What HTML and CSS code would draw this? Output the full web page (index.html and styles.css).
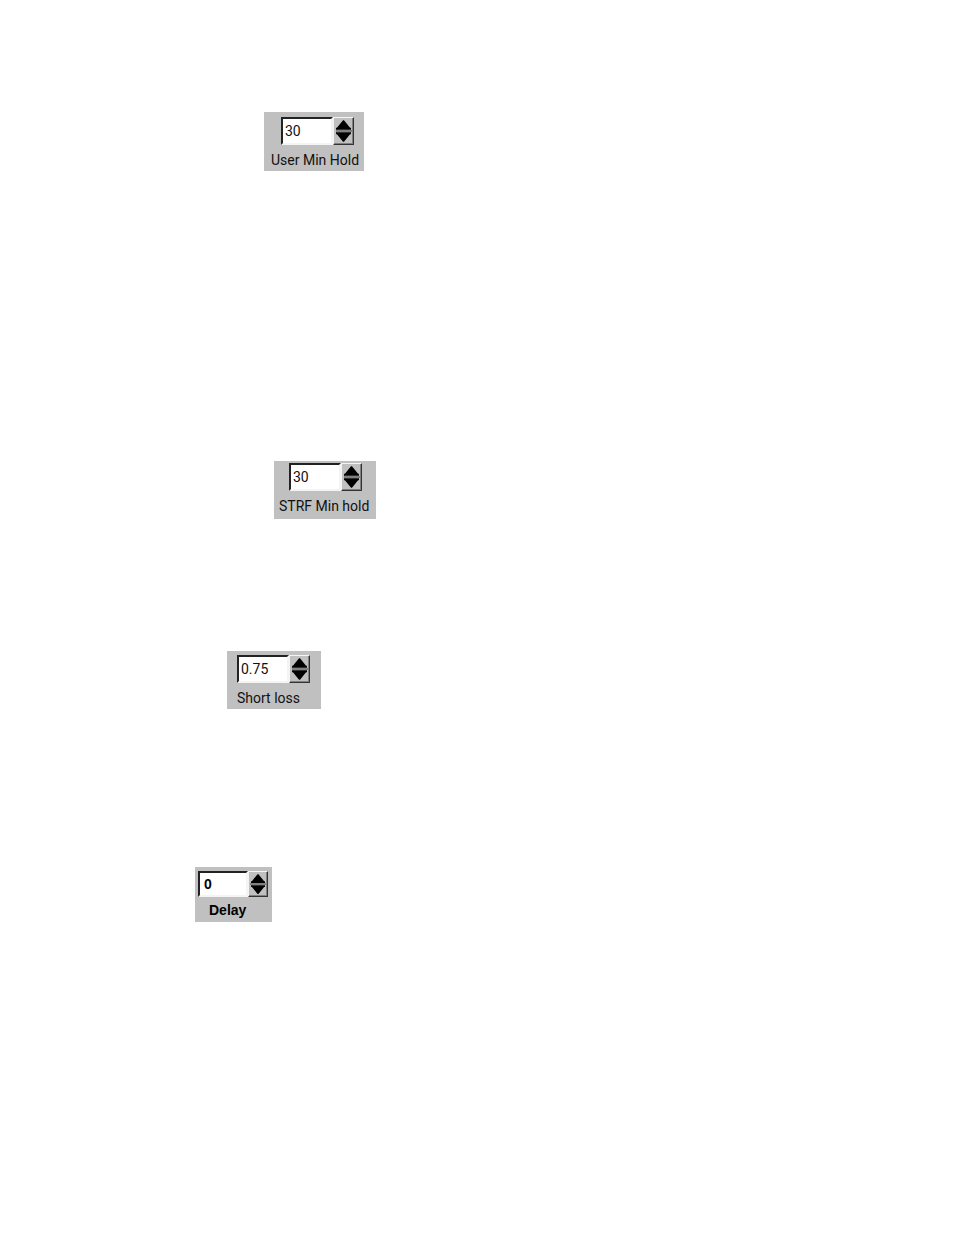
FILE: index.html
```html
<!DOCTYPE html>
<html lang="en">
<head>
<meta charset="utf-8">
<title>Hold settings</title>
<link rel="stylesheet" href="styles.css">
</head>
<body>
<main class="page">
  <section class="panel panel-user">
    <div class="spinner">
      <input class="value" id="user-hold" type="text" value="30">
      <div class="steps">
        <button class="step" type="button" aria-label="Increase user min hold"><svg class="arrow" viewBox="0 0 16 10"><path d="M7.5 0H8.5L15 8H16V10H0V8H1Z"/></svg></button>
        <button class="step" type="button" aria-label="Decrease user min hold"><svg class="arrow" viewBox="0 0 16 10"><path d="M0 0H16V2H15L8.5 10H7.5L1 2H0Z"/></svg></button>
      </div>
    </div>
    <label class="caption" for="user-hold">User Min Hold</label>
  </section>
  <section class="panel panel-strf">
    <div class="spinner">
      <input class="value" id="strf-hold" type="text" value="30">
      <div class="steps">
        <button class="step" type="button" aria-label="Increase STRF min hold"><svg class="arrow" viewBox="0 0 16 10"><path d="M7.5 0H8.5L15 8H16V10H0V8H1Z"/></svg></button>
        <button class="step" type="button" aria-label="Decrease STRF min hold"><svg class="arrow" viewBox="0 0 16 10"><path d="M0 0H16V2H15L8.5 10H7.5L1 2H0Z"/></svg></button>
      </div>
    </div>
    <label class="caption" for="strf-hold">STRF Min hold</label>
  </section>
  <section class="panel panel-loss">
    <div class="spinner">
      <input class="value" id="short-loss" type="text" value="0.75">
      <div class="steps">
        <button class="step" type="button" aria-label="Increase short loss"><svg class="arrow" viewBox="0 0 16 10"><path d="M7.5 0H8.5L15 8H16V10H0V8H1Z"/></svg></button>
        <button class="step" type="button" aria-label="Decrease short loss"><svg class="arrow" viewBox="0 0 16 10"><path d="M0 0H16V2H15L8.5 10H7.5L1 2H0Z"/></svg></button>
      </div>
    </div>
    <label class="caption" for="short-loss">Short loss</label>
  </section>
  <section class="panel panel-delay">
    <div class="spinner">
      <input class="value" id="delay" type="text" value="0">
      <div class="steps">
        <button class="step" type="button" aria-label="Increase delay"><svg class="arrow" viewBox="0 0 16 10"><path d="M7.5 0H8.5L15 8H16V10H0V8H1Z"/></svg></button>
        <button class="step" type="button" aria-label="Decrease delay"><svg class="arrow" viewBox="0 0 16 10"><path d="M0 0H16V2H15L8.5 10H7.5L1 2H0Z"/></svg></button>
      </div>
    </div>
    <label class="caption" for="delay">Delay</label>
  </section>
</main>
</body>
</html>
```
FILE: styles.css
```css
* {
  box-sizing: border-box;
}

body {
  margin: 0;
  background: #fff;
  color: #111;
  font-family: Roboto, sans-serif;
  font-size: 14px;
}

.page {
  display: flex;
  flex-direction: column;
  align-items: flex-start;
  padding: 112px 0 312px;
}

.panel {
  display: flex;
  flex-direction: column;
  align-items: flex-start;
  gap: 6px;
  background: #c0c0c0;
}

.panel-user {
  margin-left: 264px;
  padding: 5px 5px 2px 7px;
}

.panel-user .spinner {
  margin-left: 10px;
}

.panel-strf {
  margin: 290px 0 0 274px;
  padding: 2px 7px 4px 5px;
}

.panel-strf .spinner {
  margin-left: 10px;
}

.panel-loss {
  margin: 132px 0 0 227px;
  padding: 4px 11px 2px 10px;
}

.panel-delay {
  gap: 4px;
  margin: 158px 0 0 195px;
  padding: 4px 4px 3px 3px;
  color: #000;
  font-family: "Liberation Sans", sans-serif;
  font-weight: bold;
}

.spinner {
  display: flex;
  height: 28px;
}

.value {
  width: 52px;
  padding: 0 2px;
  border: 2px solid;
  border-color: #222 #f4f4f4 #f4f4f4 #222;
  border-radius: 0;
  outline: 0;
  background: #fff;
  color: inherit;
  font: inherit;
}

.steps {
  display: flex;
  flex-direction: column;
  gap: 2px;
  width: 21px;
  padding: 2px;
  border: 1px solid;
  border-color: #f4f4f4 #333 #333 #f4f4f4;
  background: linear-gradient(#808080, #808080) center / 16px 2px no-repeat #c0c0c0;
  box-shadow: inset -1px -1px #808080;
}

.step {
  display: flex;
  flex: 1;
  min-height: 0;
  align-items: flex-end;
  justify-content: center;
  padding: 0;
  border: 0;
  background: none;
}

.step + .step {
  align-items: flex-start;
}

.arrow {
  width: 16px;
  height: 10px;
  fill: #000;
}

.caption {
  line-height: 18px;
  white-space: nowrap;
}

.panel-delay .spinner {
  height: 26px;
}

.panel-delay .value {
  width: 50px;
  padding-left: 4px;
}

.panel-delay .steps {
  width: 20px;
}

.panel-delay .arrow {
  width: 14px;
  height: 9px;
}

.panel-delay .caption {
  margin-left: 11px;
}
```
